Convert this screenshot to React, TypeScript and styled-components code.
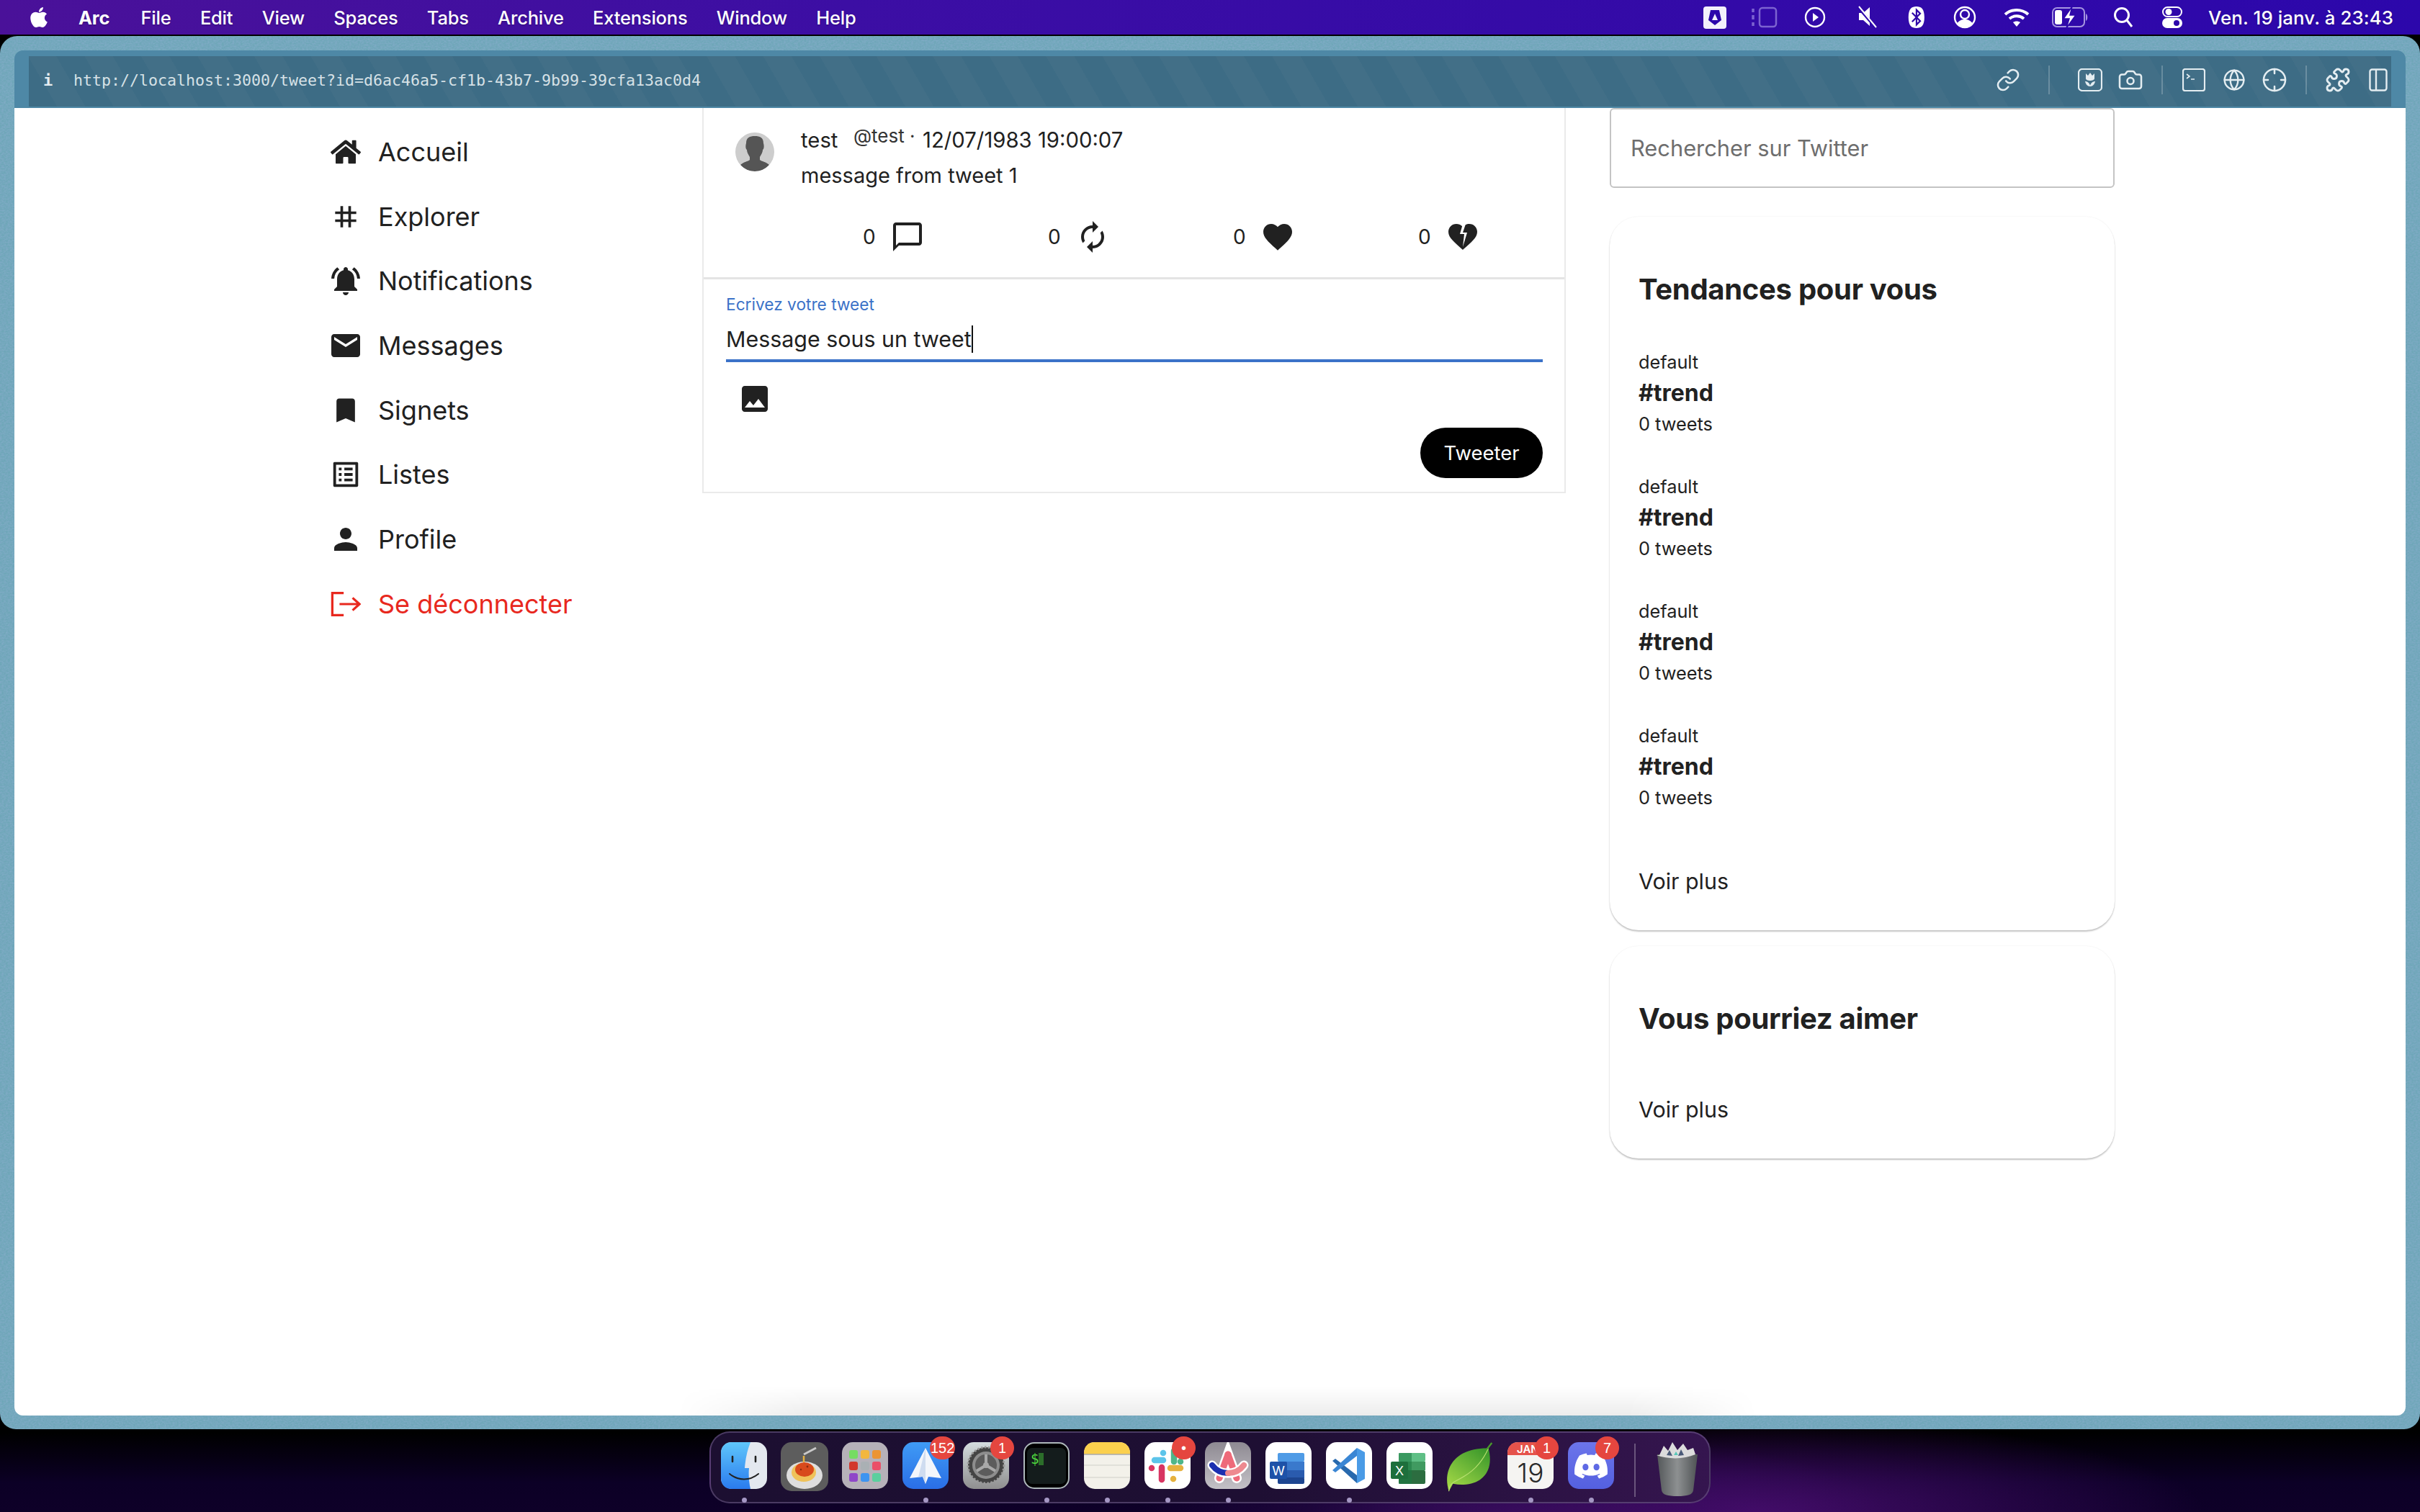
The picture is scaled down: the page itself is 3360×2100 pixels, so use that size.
import React from "react";
import styled, { createGlobalStyle } from "styled-components";
import { FaHome, FaApple, FaDiscord } from "react-icons/fa";
import {
  MdTag, MdNotificationsActive, MdEmail, MdBookmark, MdListAlt, MdPerson,
  MdChatBubbleOutline, MdAutorenew, MdFavorite, MdHeartBroken, MdImage,
} from "react-icons/md";
import { BsBluetooth } from "react-icons/bs";
import { Link as LinkIcon, Camera, Globe, Crosshair, Puzzle } from "lucide-react";

const noise =
  "data:image/svg+xml;utf8," +
  encodeURIComponent(
    `<svg xmlns='http://www.w3.org/2000/svg' width='400' height='400'><filter id='n'><feTurbulence type='fractalNoise' baseFrequency='0.35 0.5' numOctaves='3' stitchTiles='stitch'/><feColorMatrix values='0 0 0 0 0.42 0 0 0 0 0.48 0 0 0 0 0.82 0.9 0 0 0 -0.25'/></filter><rect width='400' height='400' fill='#6ea6b8'/><rect width='400' height='400' filter='url(#n)' opacity='0.55'/></svg>`
  );

const Global = createGlobalStyle`
  *, *::before, *::after { box-sizing: border-box; }
  html, body { margin: 0; padding: 0; width: 3360px; height: 2100px; overflow: hidden; }
  body { font-family: Inter, "Noto Sans", sans-serif; color: #212121; }
`;

const Screen = styled.div`
  width: 3360px; height: 2100px; display: flex; flex-direction: column; overflow: hidden;
  background:
    radial-gradient(ellipse 620px 130px at 2440px 2100px, #420c68 0%, rgba(66,12,104,0) 100%),
    radial-gradient(ellipse 520px 110px at 2100px 2100px, #2e0b52 0%, rgba(46,11,82,0) 100%),
    linear-gradient(to bottom, #000 0, #000 1990px, #0c0026 2060px, #0e0028 2100px);
`;

/* ---------- macOS menu bar ---------- */
const MenuBar = styled.header`
  height: 48px; flex: none; display: flex; align-items: center; color: #fff;
  background: linear-gradient(to right, #4a1199 0%, #3c0ea4 35%, #2c07ab 100%);
  padding-left: 39px; font-size: 25.5px; text-shadow: 0 1px 2px rgba(0,0,0,.25);
`;
const AppleMark = styled.span`
  width: 70px; flex: none; display: flex; svg { width: 30px; height: 32px; }
`;
const MenuItems = styled.nav` display: flex; gap: 40.3px; `;
const MenuItem = styled.span<{ $bold?: boolean }>`
  font-weight: ${(p) => (p.$bold ? 700 : 500)};
  margin-right: ${(p) => (p.$bold ? 3 : 0)}px;
  letter-spacing: -0.2px;
`;
const StatusArea = styled.div` margin-left: auto; display: flex; align-items: center; padding-right: 37px; `;
const StatusSlot = styled.span<{ $w: number }>`
  width: ${(p) => p.$w}px; flex: none; display: flex; justify-content: center; align-items: center;
`;
const Clock = styled.span` margin-left: 17px; font-size: 25.8px; font-weight: 500; letter-spacing: 0.1px; white-space: nowrap; `;

/* ---------- Arc window ---------- */
const Window = styled.main`
  margin-top: 2px; height: 1935px; flex: none; padding: 20px 20px 19px 20px;
  border-radius: 24px 24px 22px 22px; display: flex; flex-direction: column;
  background: #6ea6b8 url("${noise}");
`;
const ToolbarFrame = styled.div`
  height: 80px; flex: none; background: #4e88a6; border-radius: 12px 12px 0 0; padding: 8px 20px 2px 20px;
  display: flex;
`;
const Toolbar = styled.div`
  flex: 1; display: flex; align-items: center; padding: 0 0 4px 20px; color: #e4edf1;
  background: repeating-linear-gradient(60deg, #3d6c85 0 34px, #426f87 34px 68px);
`;
const InfoMark = styled.span` font: 700 22px "DejaVu Sans Mono", monospace; width: 42px; flex: none; `;
const Url = styled.span` font: 21.6px "DejaVu Sans Mono", monospace; color: #d6e1e6; white-space: nowrap; `;
const ToolIcons = styled.div` margin-left: auto; display: flex; align-items: center; `;
const ToolSlot = styled.span<{ $w: number; $ml?: number }>`
  width: ${(p) => p.$w}px; margin-left: ${(p) => p.$ml ?? 0}px; flex: none; display: flex; justify-content: center; align-items: center;
  svg { display: block; }
`;
const ToolSep = styled.span<{ $gap: number }>`
  width: 2px; height: 40px; flex: none; margin: 0 ${(p) => p.$gap}px; background: rgba(255,255,255,.22);
`;

const Content = styled.div`
  position: relative; flex: 1; background: #fff; border-radius: 0 0 12px 12px; overflow: hidden;
  display: flex; padding-left: 436px; align-items: flex-start;
`;
const DockShade = styled.div`
  position: absolute; left: 920px; width: 1500px; bottom: 0; height: 40px; pointer-events: none;
  background: linear-gradient(to top, rgba(0,0,0,.075), rgba(0,0,0,0));
  -webkit-mask-image: linear-gradient(to right, transparent, #000 12%, #000 88%, transparent);
  mask-image: linear-gradient(to right, transparent, #000 12%, #000 88%, transparent);
`;

/* ---------- left nav ---------- */
const SideNav = styled.nav` width: 519px; flex: none; padding-top: 16px; display: flex; flex-direction: column; `;
const NavRow = styled.div<{ $danger?: boolean }>`
  height: 89.7px; display: flex; align-items: center; gap: 21px; font-size: 36px;
  color: ${(p) => (p.$danger ? "#e8281e" : "#212121")};
`;
const NavIcon = styled.span`
  width: 48px; height: 48px; flex: none; display: flex; align-items: center; justify-content: center;
`;

/* ---------- center column ---------- */
const Feed = styled.section`
  width: 1199px; flex: none; border: 2px solid #eaeaea; border-top: 0; display: flex; flex-direction: column;
`;
const TweetBlock = styled.article` height: 238px; flex: none; border-bottom: 3px solid #e4e4e4; display: flex; flex-direction: column; `;
const TweetHead = styled.div` display: flex; padding: 34px 0 0 44px; gap: 37px; `;
const Avatar = styled.svg` width: 54px; height: 54px; flex: none; border-radius: 50%; `;
const TweetBody = styled.div` display: flex; flex-direction: column; gap: 13px; margin-top: -7px;`;
const TweetMeta = styled.div` display: flex; align-items: flex-start; font-size: 29.3px; line-height: 36px; `;
const Author = styled.span` width: 73px; `;
const Handle = styled.span` font-size: 26px; line-height: 26px; width: 96px; white-space: nowrap; color: #333; margin-top: -1px;`;
const TweetText = styled.div` font-size: 29px; line-height: 36px; `;
const ActionRow = styled.div` display: flex; padding: 43px 0 0 221px; `;
const Action = styled.div` width: 257px; flex: none; display: flex; align-items: center; gap: 20px; font-size: 28px; `;
const Composer = styled.form` height: 295px; flex: none; padding: 0 30px 0 31px; display: flex; flex-direction: column; position: relative; `;
const FieldLabel = styled.label` font-size: 22.7px; line-height: 28px; color: #3b72c8; margin-top: 21px; `;
const FieldValue = styled.div`
  font-size: 30.4px; line-height: 44px; margin-top: 12px; border-bottom: 4px solid #3b72c8;
  display: flex; align-items: flex-start; height: 54px;
`;
const Caret = styled.span` width: 2px; height: 38px; background: #111; margin-top: 3px; `;
const ImageButton = styled.span` margin: 27px 0 0 16px; height: 48px; display: flex; `;
const SubmitRow = styled.div` display: flex; justify-content: flex-end; margin-top: 16px; `;
const SubmitButton = styled.span`
  width: 170px; height: 70px; background: #000; color: #fff; border-radius: 35px; display: flex;
  align-items: center; justify-content: center; font-size: 27.5px;
`;

/* ---------- right column ---------- */
const RightCol = styled.aside` margin-left: 61px; width: 701px; flex: none; display: flex; flex-direction: column; `;
const Search = styled.div`
  height: 111px; border: 2px solid #c4c4c4; border-radius: 6px; display: flex; align-items: center;
  padding-left: 27px; font-size: 30.8px; color: #6e6e6e; margin-bottom: 40px;
`;
const Card = styled.section<{ $h: number }>`
  height: ${(p) => p.$h}px; border-radius: 40px; padding: 0 40px; background: #fff;
  box-shadow: 0 2px 2px rgba(0,0,0,.22), 0 0 2px rgba(0,0,0,.08); display: flex; flex-direction: column; margin-bottom: 22px;
`;
const CardTitle = styled.h2` margin: 75px 0 0; font-size: 40px; line-height: 52px; font-weight: 700; letter-spacing: -0.3px; `;
const TrendList = styled.div` display: flex; flex-direction: column; margin-top: 57px; `;
const Trend = styled.div` height: 173px; display: flex; flex-direction: column; `;
const TrendSmall = styled.div` font-size: 25.3px; line-height: 36px; `;
const TrendTag = styled.div` font-size: 32px; line-height: 50px; font-weight: 700; `;
const SeeMore = styled.div<{ $top: number }>` margin-top: ${(p) => p.$top}px; font-size: 30.4px; line-height: 40px; `;

/* ---------- dock ---------- */
const DockArea = styled.footer` flex: 1; display: flex; justify-content: flex-start; padding: 3px 0 0 985px; align-items: flex-start; `;
const Dock = styled.div`
  width: 1390px; height: 100px; border: 2px solid rgba(130,110,160,.45); border-radius: 28px;
  background: linear-gradient(to right, #1c0f31 0%, #1e0f33 55%, #35154f 100%);
  display: flex; padding: 13px 0 0 4px;
`;
const DockSlot = styled.div`
  position: relative; width: 84px; height: 84px; flex: none; display: flex; justify-content: center;
  svg { display: block; }
`;
const DockDot = styled.span`
  position: absolute; bottom: 0px; left: 39px; width: 7px; height: 7px; border-radius: 50%; background: #a597c4;
`;
const DockBadge = styled.span`
  position: absolute; top: -8px; left: 48px; min-width: 33px; height: 32px; border-radius: 16px; background: #e5463f; color: #fff;
  display: flex; align-items: center; justify-content: center; font-size: 20px; padding: 0 1px;
  font-family: "Liberation Sans", sans-serif;
`;
const DockDivider = styled.span` width: 2px; height: 74px; margin: 2px 16px 0 18px; flex: none; background: rgba(255,255,255,.28); `;
const DiscordTile = styled.span`
  width: 64px; height: 65px; border-radius: 15px; background: linear-gradient(#6c75ea,#5460e0); display: flex; align-items: center; justify-content: center; color: #fff;
`;

/* ---------- drawings ---------- */
const Logout = () => (
  <svg width="42" height="36" viewBox="0 0 44 36" fill="none" stroke="#e8281e" strokeWidth="3.4">
    <path d="M19 2H2.5v32H19" />
    <path d="M13 18h28M32 9l10 9-10 9" />
  </svg>
);
const MarkA = () => (
  <svg width="32" height="31" viewBox="0 0 32 31">
    <rect width="32" height="31" rx="4" fill="#f3f0fb" />
    <path d="M10 5h12l3 14-9 7-9-7z" fill="#2c07ab" />
    <path d="M16 10l4 9h-8z" fill="#f3f0fb" />
  </svg>
);
const Sidecar = () => (
  <svg width="36" height="30" viewBox="0 0 36 30" fill="none" stroke="#7c63d0" strokeWidth="2.5">
    <rect x="11" y="2" width="23" height="26" rx="4" />
    <path d="M2 3v5M2 12v6M2 22v5" strokeWidth="3.5" />
  </svg>
);
const Play = () => (
  <svg width="30" height="30" viewBox="0 0 30 30" fill="none" stroke="#fff" strokeWidth="2.4">
    <circle cx="15" cy="15" r="13" />
    <path d="M12 9l8 6-8 6z" fill="#fff" stroke="none" />
  </svg>
);
const Mute = () => (
  <svg width="30" height="32" viewBox="0 0 30 32" fill="none">
    <path d="M4 10h6l9-8v26l-9-8H4z" fill="#fff" />
    <path d="M3 2l24 28" stroke="#2c07ab" strokeWidth="4" />
    <path d="M4 1l24 29" stroke="#fff" strokeWidth="2" />
  </svg>
);
const Account = () => (
  <svg width="32" height="32" viewBox="0 0 32 32" fill="none">
    <circle cx="16" cy="16" r="14" stroke="#fff" strokeWidth="2.4" />
    <circle cx="16" cy="12" r="6" stroke="#fff" strokeWidth="2.4" />
    <path d="M5 25c3-5 7-6 11-6s8 1 11 6c-3 4-7 6-11 6s-8-2-11-6z" fill="#fff" />
  </svg>
);
const Wifi = () => (
  <svg width="36" height="28" viewBox="0 0 36 28" fill="none" stroke="#fff" strokeWidth="4">
    <path d="M2 10c9-8 23-8 32 0M8 16c6-5 14-5 20 0" />
    <path d="M13 21l5 6 5-6c-3-2-7-2-10 0z" fill="#fff" stroke="none" />
  </svg>
);
const Battery = () => (
  <svg width="52" height="30" viewBox="0 0 52 30" fill="none">
    <rect x="1" y="2" width="44" height="26" rx="6" stroke="#a595e0" strokeWidth="2" />
    <rect x="4" y="5" width="10" height="20" rx="3" fill="#fff" />
    <path d="M47 10c3 1 3 9 0 10z" fill="#a595e0" />
    <path d="M28 0l-12 17h8l-4 13 13-18h-8z" fill="#fff" stroke="#2c07ab" strokeWidth="1.5" />
  </svg>
);
const Lens = () => (
  <svg width="28" height="30" viewBox="0 0 28 30" fill="none" stroke="#fff" strokeWidth="3">
    <circle cx="12" cy="12" r="9.5" />
    <path d="M19 19l7 9" />
  </svg>
);
const Toggles = () => (
  <svg width="28" height="30" viewBox="0 0 28 30">
    <rect x="1" y="1" width="26" height="13" rx="6.5" fill="none" stroke="#fff" strokeWidth="2" />
    <circle cx="9" cy="7.5" r="4.5" fill="#fff" />
    <rect y="16" width="28" height="14" rx="7" fill="#fff" />
    <circle cx="20" cy="23" r="4" fill="#2c07ab" />
  </svg>
);
const ToolPicture = () => (
  <svg width="34" height="32" viewBox="0 0 34 32" fill="none" stroke="#e4edf1" strokeWidth="2.2">
    <rect x="1" y="1" width="32" height="30" rx="5" />
    <path d="M17 24V14M11 7l3 3 3-4 3 4 3-3v7c0 2-3 3-6 3s-6-1-6-3zM10 18c3 0 6 2 7 6 1-4 4-6 7-6-1 4-3 7-7 7s-6-3-7-7z" fill="#e4edf1" stroke="none" />
  </svg>
);
const ToolTerminal = () => (
  <svg width="32" height="32" viewBox="0 0 32 32" fill="none" stroke="#e4edf1" strokeWidth="2.2">
    <rect x="1" y="1" width="30" height="30" rx="3" />
    <path d="M6 8l4 3-4 3M12 15h5" strokeWidth="1.6" />
  </svg>
);
const ToolPanel = () => (
  <svg width="26" height="32" viewBox="0 0 26 32" fill="none" stroke="#e4edf1" strokeWidth="2.4">
    <rect x="1.5" y="1.5" width="23" height="29" rx="3" />
    <path d="M10 2v28" />
  </svg>
);

const DefaultAvatar = () => (
  <Avatar viewBox="0 0 54 54">
    <rect width="54" height="54" fill="#cdcdcd" />
    <path d="M15 15c0-8 5-10 12-10s12 2 12 10c1 3 1 8-1 9 0 4-3 8-4 10v4c2 2 9 3 13 7-5 6-12 9-20 9s-15-3-20-9c4-4 11-5 13-7v-4c-1-2-4-6-4-10-2-1-2-6-1-9z" fill="#555" />
  </Avatar>
);

const Finder = () => (
  <svg width="64" height="65" viewBox="0 0 64 65">
    <defs><linearGradient id="fb" x1="0" y1="0" x2="0" y2="1"><stop offset="0" stopColor="#5fc6fb" /><stop offset="1" stopColor="#2a7bee" /></linearGradient></defs>
    <rect width="64" height="65" rx="15" fill="#e4e8ef" />
    <path d="M15 0h26c-4 10-7 22-8 36h6c-1 10 0 20 2 29H15C6 65 0 59 0 50V15C0 6 6 0 15 0z" fill="url(#fb)" />
    <path d="M16 20v7M48 20v7" stroke="#222" strokeWidth="2.6" strokeLinecap="round" />
    <path d="M12 44c12 10 28 10 40 0" stroke="#222" strokeWidth="2" fill="none" strokeLinecap="round" />
  </svg>
);
const Pasta = () => (
  <svg width="66" height="68" viewBox="0 0 66 68">
    <rect width="66" height="68" rx="15" fill="#5d5d5d" />
    <ellipse cx="33" cy="46" rx="25" ry="19" fill="#dedede" />
    <ellipse cx="32" cy="42" rx="17" ry="13" fill="#efc25a" />
    <ellipse cx="33" cy="38" rx="13" ry="10" fill="#d84a1c" />
    <circle cx="37" cy="34" r="1.4" fill="#8a2a10" /><circle cx="28" cy="38" r="1.2" fill="#8a2a10" />
    <path d="M32 28v-9" stroke="#e5b13f" strokeWidth="2.5" />
    <path d="M32 17l17-9" stroke="#c9c9c9" strokeWidth="3" />
  </svg>
);
const Launchpad = () => {
  const c = ["#76dc62", "#f2b73e", "#ec9433", "#d2372c", "#aab0b4", "#ea5068", "#8f47c8", "#3f94f0", "#5bcf9e"];
  return (
    <svg width="64" height="65" viewBox="0 0 64 65">
      <rect width="64" height="65" rx="15" fill="#b6b1b9" />
      {c.map((f, i) => <rect key={f} x={10 + (i % 3) * 16} y={11 + Math.floor(i / 3) * 16} width="12" height="12" rx="3" fill={f} />)}
    </svg>
  );
};
const Spark = () => (
  <svg width="64" height="65" viewBox="0 0 64 65">
    <defs><linearGradient id="sp" x1="0" y1="0" x2="0" y2="1"><stop offset="0" stopColor="#3f9bf5" /><stop offset="1" stopColor="#2a6ee6" /></linearGradient></defs>
    <rect width="64" height="65" rx="15" fill="url(#sp)" />
    <path d="M32 8L54 50 36 48 32 58 28 48 10 50z" fill="#f3f6fb" />
    <path d="M32 8v50l-4-10-6 .5z" fill="#cfdcf0" />
  </svg>
);
const Gear = () => (
  <svg width="64" height="65" viewBox="0 0 64 65">
    <defs><linearGradient id="gr" x1="0" y1="0" x2="0" y2="1"><stop offset="0" stopColor="#d4dcdf" /><stop offset="1" stopColor="#8f8f8f" /></linearGradient></defs>
    <rect width="64" height="65" rx="15" fill="url(#gr)" />
    <circle cx="32" cy="32" r="25" fill="#444" />
    <circle cx="32" cy="32" r="25" fill="none" stroke="#9a9a9a" strokeWidth="3" strokeDasharray="2.5 2.5" />
    <circle cx="32" cy="32" r="19" fill="#8d8d8d" />
    <circle cx="32" cy="32" r="15" fill="#5c5c5c" />
    <path d="M32 32V17M32 32L19 40M32 32l13 8" stroke="#a8a8a8" strokeWidth="4" />
    <circle cx="32" cy="32" r="4" fill="#a8a8a8" />
  </svg>
);
const Term = () => (
  <svg width="64" height="65" viewBox="0 0 64 65">
    <rect x="1" y="1" width="62" height="63" rx="14" fill="#000" stroke="#aeb8bb" strokeWidth="2" />
    <rect x="5" y="8" width="54" height="50" rx="7" fill="#141c1c" />
    <text x="10" y="30" fontFamily="DejaVu Sans Mono, monospace" fontSize="19" fill="#4fd93f">$</text>
    <rect x="21" y="15" width="7" height="17" fill="#2c6e2a" />
  </svg>
);
const Notes = () => (
  <svg width="64" height="65" viewBox="0 0 64 65">
    <rect width="64" height="65" rx="15" fill="#f3f1ea" />
    <path d="M0 17V15C0 6 6 0 15 0h34c9 0 15 6 15 15v2z" fill="#fbd04d" />
    <path d="M0 17h64" stroke="#aaa" strokeWidth="1.5" />
    <path d="M0 32h64M0 49h64" stroke="#dcdad3" strokeWidth="1.5" />
  </svg>
);
const Slack = () => (
  <svg width="64" height="65" viewBox="0 0 64 65">
    <rect width="64" height="65" rx="15" fill="#fff" />
    <g strokeLinecap="round" strokeWidth="8.5" fill="none">
      <path d="M14 25h12M26 15v0" stroke="#5cc4ea" /><path d="M41 12v15M50 27v0" stroke="#4fb68a" />
      <path d="M10 36v0M24 35v17" stroke="#d83562" /><path d="M36 36h14M40 51v0" stroke="#e6b13e" />
    </g>
  </svg>
);
const ArcApp = () => (
  <svg width="64" height="65" viewBox="0 0 64 65">
    <defs><linearGradient id="ar" x1="0" y1="0" x2="0" y2="1"><stop offset="0" stopColor="#8e8a92" /><stop offset="1" stopColor="#c4c1c7" /></linearGradient></defs>
    <rect width="64" height="65" rx="15" fill="url(#ar)" />
    <path d="M20 50L32 17l12 33" fill="none" stroke="#fff" strokeWidth="14" strokeLinecap="round" />
    <path d="M20 50L32 17" fill="none" stroke="#ee6a7a" strokeWidth="9" strokeLinecap="round" />
    <path d="M44 50L32 17" fill="none" stroke="#ee6a7a" strokeWidth="9" strokeLinecap="round" />
    <path d="M10 32c10 15 34 15 44 0" fill="none" stroke="#fff" strokeWidth="13" strokeLinecap="round" />
    <path d="M10 32c6 8 14 11 22 11" fill="none" stroke="#1b2fb0" strokeWidth="8" strokeLinecap="round" />
    <path d="M32 43c8 0 16-3 22-11" fill="none" stroke="#ee8a90" strokeWidth="8" strokeLinecap="round" />
  </svg>
);
const Word = () => (
  <svg width="64" height="65" viewBox="0 0 64 65">
    <rect width="64" height="65" rx="15" fill="#fff" />
    <rect x="17" y="15" width="37" height="12" fill="#4f9be6" rx="2" /><rect x="17" y="27" width="37" height="12" fill="#3a79cc" />
    <rect x="17" y="39" width="37" height="11" fill="#2a5bae" /><rect x="17" y="49" width="37" height="9" fill="#1d4590" rx="2" />
    <rect x="6" y="27" width="24" height="24" rx="2" fill="#1e52a8" />
    <text x="18" y="46" textAnchor="middle" fontFamily="Liberation Sans, sans-serif" fontSize="18" fill="#fff">W</text>
  </svg>
);
const VSCode = () => (
  <svg width="64" height="65" viewBox="0 0 64 65">
    <rect width="64" height="65" rx="15" fill="#fff" />
    <path d="M43 8l11 6v37l-11 6z" fill="#4a9be6" />
    <path d="M9 26l4-3 30 23v11z" fill="#2869ad" /><path d="M9 39l4 3 30-23V8z" fill="#3a86d4" />
  </svg>
);
const Excel = () => (
  <svg width="64" height="65" viewBox="0 0 64 65">
    <rect width="64" height="65" rx="15" fill="#fff" />
    <rect x="17" y="15" width="37" height="12" fill="#5fbf85" rx="2" /><rect x="17" y="27" width="37" height="12" fill="#409a60" />
    <rect x="17" y="39" width="37" height="19" fill="#2c6d40" rx="2" /><rect x="17" y="15" width="18" height="43" fill="#1c7a42" opacity=".55" />
    <rect x="6" y="27" width="24" height="24" rx="2" fill="#1d6f3c" />
    <text x="18" y="46" textAnchor="middle" fontFamily="Liberation Sans, sans-serif" fontSize="18" fill="#fff">X</text>
  </svg>
);
const Leaf = () => (
  <svg width="72" height="72" viewBox="0 0 74 76">
    <defs><linearGradient id="lf" x1="0.8" y1="0" x2="0.1" y2="1"><stop offset="0" stopColor="#3e9a2c" /><stop offset="1" stopColor="#a7da47" /></linearGradient></defs>
    <path d="M6 72C-4 40 14 8 64 9 74 46 50 68 12 61z" fill="url(#lf)" />
    <path d="M6 72c0-10 6-12 8-14C30 50 50 40 64 9" fill="none" stroke="#b8e070" strokeWidth="1.2" />
    <path d="M62 10l7-9" stroke="#4a9a2c" strokeWidth="2.5" />
  </svg>
);
const Calendar = () => (
  <svg width="64" height="65" viewBox="0 0 64 65">
    <rect width="64" height="65" rx="15" fill="#f5f4f2" />
    <path d="M0 15C0 6 6 0 15 0h34c9 0 15 6 15 15v3H0z" fill="#e5534b" />
    <text x="13" y="15" fontFamily="Inter, sans-serif" fontWeight="600" fontSize="15" fill="#fff">JANV</text>
    <text x="32" y="56" textAnchor="middle" fontFamily="Inter, sans-serif" fontWeight="300" fontSize="37" fill="#2a2a2a">19</text>
  </svg>
);
const Trash = () => (
  <svg width="58" height="75" viewBox="0 0 58 75">
    <defs><linearGradient id="tr" x1="0" y1="0" x2="1" y2="0"><stop offset="0" stopColor="#54585a" /><stop offset=".5" stopColor="#8d9091" /><stop offset="1" stopColor="#4e5254" /></linearGradient></defs>
    <path d="M1 17h56l-6 50c-1 6-8 8-22 8s-21-2-22-8z" fill="url(#tr)" />
    <path d="M4 18L10 5l6 7 6-12 7 11 8-9 6 9 8-3 3 9c-16 7-38 7-54 1z" fill="#dcdcdc" />
    <path d="M14 18l4-7 4 8zM30 19l4-9 4 8z" fill="#4a5a78" />
    <path d="M24 18l3-5 3 5z" fill="#58c8b8" />
  </svg>
);

const navItems: [React.ReactNode, string][] = [
  [<FaHome size={42} key="h" />, "Accueil"],
  [<MdTag size={44} key="t" />, "Explorer"],
  [<MdNotificationsActive size={48} key="n" />, "Notifications"],
  [<MdEmail size={48} key="m" />, "Messages"],
  [<MdBookmark size={44} key="b" />, "Signets"],
  [<MdListAlt size={46} key="l" />, "Listes"],
  [<MdPerson size={48} key="p" />, "Profile"],
];
const dockApps: { icon: React.ReactNode; dot?: boolean; badge?: string }[] = [
  { icon: <Finder />, dot: true },
  { icon: <Pasta /> },
  { icon: <Launchpad /> },
  { icon: <Spark />, dot: true, badge: "152" },
  { icon: <Gear />, badge: "1" },
  { icon: <Term />, dot: true },
  { icon: <Notes />, dot: true },
  { icon: <Slack />, dot: true, badge: "•" },
  { icon: <ArcApp />, dot: true },
  { icon: <Word /> },
  { icon: <VSCode />, dot: true },
  { icon: <Excel /> },
  { icon: <Leaf /> },
  { icon: <Calendar />, dot: true, badge: "1" },
  { icon: <DiscordTile><FaDiscord size={50} /></DiscordTile>, dot: true, badge: "7" },
];
const menus = ["File", "Edit", "View", "Spaces", "Tabs", "Archive", "Extensions", "Window", "Help"];
const trends = [0, 1, 2, 3];

export default function App() {
  return (
    <Screen>
      <Global />
      <MenuBar>
        <AppleMark><FaApple /></AppleMark>
        <MenuItems>
          <MenuItem $bold>Arc</MenuItem>
          {menus.map((m) => <MenuItem key={m}>{m}</MenuItem>)}
        </MenuItems>
        <StatusArea>
          <StatusSlot $w={69}><MarkA /></StatusSlot>
          <StatusSlot $w={69}><Sidecar /></StatusSlot>
          <StatusSlot $w={72}><Play /></StatusSlot>
          <StatusSlot $w={71}><Mute /></StatusSlot>
          <StatusSlot $w={67}><BsBluetooth size={30} /></StatusSlot>
          <StatusSlot $w={68}><Account /></StatusSlot>
          <StatusSlot $w={75}><Wifi /></StatusSlot>
          <StatusSlot $w={76}><Battery /></StatusSlot>
          <StatusSlot $w={70}><Lens /></StatusSlot>
          <StatusSlot $w={66}><Toggles /></StatusSlot>
          <Clock>Ven. 19 janv. à 23:43</Clock>
        </StatusArea>
      </MenuBar>
      <Window>
        <ToolbarFrame>
          <Toolbar>
            <InfoMark>i</InfoMark>
            <Url>http://localhost:3000/tweet?id=d6ac46a5-cf1b-43b7-9b99-39cfa13ac0d4</Url>
            <ToolIcons>
              <ToolSlot $w={56}><LinkIcon size={34} strokeWidth={1.8} /></ToolSlot>
              <ToolSep $gap={28} />
              <ToolSlot $w={56}><ToolPicture /></ToolSlot>
              <ToolSlot $w={56}><Camera size={36} strokeWidth={1.7} /></ToolSlot>
              <ToolSep $gap={15} />
              <ToolSlot $w={56}><ToolTerminal /></ToolSlot>
              <ToolSlot $w={56}><Globe size={32} strokeWidth={1.8} /></ToolSlot>
              <ToolSlot $w={56}><Crosshair size={36} strokeWidth={1.7} /></ToolSlot>
              <ToolSep $gap={15} />
              <ToolSlot $w={56}><Puzzle size={36} strokeWidth={1.9} /></ToolSlot>
              <ToolSlot $w={36} $ml={10}><ToolPanel /></ToolSlot>
            </ToolIcons>
          </Toolbar>
        </ToolbarFrame>
        <Content>
          <SideNav>
            {navItems.map(([icon, label]) => (
              <NavRow key={label}><NavIcon>{icon}</NavIcon>{label}</NavRow>
            ))}
            <NavRow $danger><NavIcon><Logout /></NavIcon>Se déconnecter</NavRow>
          </SideNav>
          <Feed>
            <TweetBlock>
              <TweetHead>
                <DefaultAvatar />
                <TweetBody>
                  <TweetMeta>
                    <Author>test</Author>
                    <Handle>@test ·</Handle>
                    <span>12/07/1983 19:00:07</span>
                  </TweetMeta>
                  <TweetText>message from tweet 1</TweetText>
                </TweetBody>
              </TweetHead>
              <ActionRow>
                <Action>0 <MdChatBubbleOutline size={48} /></Action>
                <Action>0 <MdAutorenew size={48} /></Action>
                <Action>0 <MdFavorite size={48} /></Action>
                <Action>0 <MdHeartBroken size={48} /></Action>
              </ActionRow>
            </TweetBlock>
            <Composer>
              <FieldLabel>Ecrivez votre tweet</FieldLabel>
              <FieldValue>Message sous un tweet<Caret /></FieldValue>
              <ImageButton><MdImage size={48} /></ImageButton>
              <SubmitRow><SubmitButton>Tweeter</SubmitButton></SubmitRow>
            </Composer>
          </Feed>
          <RightCol>
            <Search>Rechercher sur Twitter</Search>
            <Card $h={991}>
              <CardTitle>Tendances pour vous</CardTitle>
              <TrendList>
                {trends.map((t) => (
                  <Trend key={t}>
                    <TrendSmall>default</TrendSmall>
                    <TrendTag>#trend</TrendTag>
                    <TrendSmall>0 tweets</TrendSmall>
                  </Trend>
                ))}
              </TrendList>
              <SeeMore $top={27}>Voir plus</SeeMore>
            </Card>
            <Card $h={295}>
              <CardTitle>Vous pourriez aimer</CardTitle>
              <SeeMore $top={80}>Voir plus</SeeMore>
            </Card>
          </RightCol>
          <DockShade />
        </Content>
      </Window>
      <DockArea>
        <Dock>
          {dockApps.map((a, i) => (
            <DockSlot key={i}>
              {a.icon}
              {a.badge && <DockBadge>{a.badge}</DockBadge>}
              {a.dot && <DockDot />}
            </DockSlot>
          ))}
          <DockDivider />
          <DockSlot><Trash /></DockSlot>
        </Dock>
      </DockArea>
    </Screen>
  );
}
